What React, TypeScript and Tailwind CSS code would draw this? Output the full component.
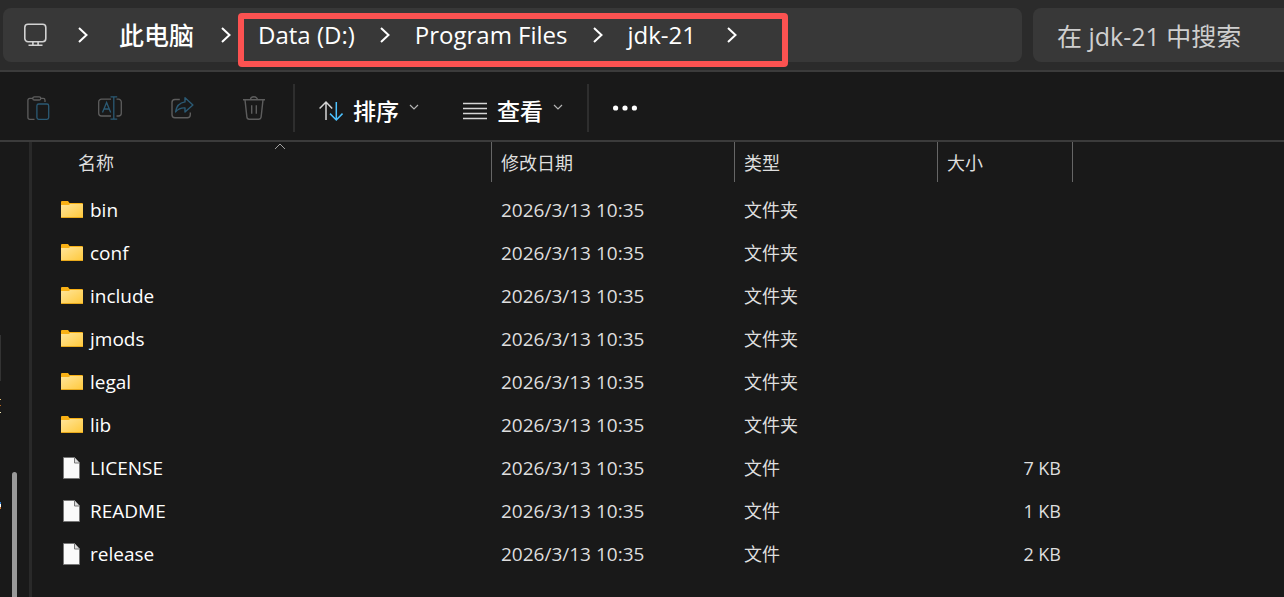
import React from 'react';

interface FileEntry {
  name: string;
  modified: string;
  kind: 'folder' | 'file';
  size?: string;
}

const entries: FileEntry[] = [
  { name: 'bin', modified: '2026/3/13 10:35', kind: 'folder' },
  { name: 'conf', modified: '2026/3/13 10:35', kind: 'folder' },
  { name: 'include', modified: '2026/3/13 10:35', kind: 'folder' },
  { name: 'jmods', modified: '2026/3/13 10:35', kind: 'folder' },
  { name: 'legal', modified: '2026/3/13 10:35', kind: 'folder' },
  { name: 'lib', modified: '2026/3/13 10:35', kind: 'folder' },
  { name: 'LICENSE', modified: '2026/3/13 10:35', kind: 'file', size: '7 KB' },
  { name: 'README', modified: '2026/3/13 10:35', kind: 'file', size: '1 KB' },
  { name: 'release', modified: '2026/3/13 10:35', kind: 'file', size: '2 KB' },
];

const Chevron = () => (
  <svg className="h-6 w-4 shrink-0" viewBox="0 0 16 24" fill="none" stroke="#fff" strokeWidth="2" aria-hidden="true">
    <path d="M4 5 L11.5 12 L4 19" />
  </svg>
);

const DownCaret = () => (
  <svg className="mb-2 h-2 w-2.5" viewBox="0 0 10 8" fill="none" stroke="#b5b5b5" strokeWidth="1.2" aria-hidden="true">
    <path d="M1 2 L5 6 L9 2" />
  </svg>
);

const MonitorIcon = () => (
  <svg className="h-6 w-6" viewBox="0 0 24 24" fill="none" stroke="#d2d2d2" strokeWidth="1.6" aria-hidden="true">
    <rect x="1.8" y="1.3" width="21" height="17.4" rx="3.2" />
    <path d="M9.9 18.8v3.4M15.1 18.8v3.4M5.5 22.2h14" />
  </svg>
);

const PasteIcon = () => (
  <svg className="h-6 w-6" viewBox="0 0 24 24" fill="none" strokeWidth="1.3" aria-hidden="true">
    <path d="M8.5 23.3H3.7A1.8 1.8 0 0 1 1.9 21.5V4.2a1.8 1.8 0 0 1 1.8-1.8H7M15 2.4h2.2a1.8 1.8 0 0 1 1.8 1.8V6" stroke="#5d5d5d" />
    <rect x="6.8" y="0.8" width="8" height="3.2" rx="1.6" stroke="#5d5d5d" />
    <rect x="10.9" y="8" width="11.8" height="15.3" rx="1.8" stroke="#2b5a74" />
  </svg>
);

const RenameIcon = () => (
  <svg className="h-6 w-6" viewBox="0 0 24 24" fill="none" strokeWidth="1.3" aria-hidden="true">
    <path d="M13 3.2H3.5A2.8 2.8 0 0 0 .7 6v11.2A2.8 2.8 0 0 0 3.5 20H13M18.5 3.2h1.8A2.8 2.8 0 0 1 23.3 6v11.2a2.8 2.8 0 0 1-2.8 2.8h-2" stroke="#5d5d5d" />
    <path d="M4.5 16.5 8.6 6.5l4.1 10M6 13h5.3M12.5.8h6.7M12.5 23.2h6.7M15.8 1v22" stroke="#2b5a74" />
  </svg>
);

const ShareIcon = () => (
  <svg className="h-6 w-6" viewBox="0 0 24 24" fill="none" strokeWidth="1.4" strokeLinejoin="round" aria-hidden="true">
    <path d="M9.8 3.5H5A3 3 0 0 0 2 6.5v12.3a3 3 0 0 0 3 3h12.3a3 3 0 0 0 3-3V16.5" stroke="#5d5d5d" />
    <path d="M15 1.8 22.9 9l-7.9 7v-4.1c-4-.2-6.9 1-9.4 4 .7-5.2 3.8-9.2 9.4-10z" stroke="#2b5a74" />
  </svg>
);

const TrashIcon = () => (
  <svg className="h-6 w-6" viewBox="0 0 24 24" fill="none" stroke="#5d5d5d" strokeWidth="1.4" aria-hidden="true">
    <path d="M1 3.8h22M8.5 3.8a3.5 3 0 0 1 7 0M3 3.8l1.9 17.4a2.3 2.3 0 0 0 2.3 2h9.6a2.3 2.3 0 0 0 2.3-2L21 3.8M9.7 9.3v8.4M14.3 9.3v8.4" />
  </svg>
);

const SortIcon = () => (
  <svg className="h-6 w-6" viewBox="0 0 24 24" fill="none" strokeWidth="1.5" aria-hidden="true">
    <path d="M7 21V3M.6 9.6 7 3l6.2 6.4" stroke="#d5d5d5" />
    <path d="M17.3 3v18M11 14.6l6.3 6.4 6.2-6.4" stroke="#4cc2ff" />
  </svg>
);

const ViewIcon = () => (
  <svg className="h-6 w-6" viewBox="0 0 24 24" fill="none" stroke="#d5d5d5" strokeWidth="1.4" aria-hidden="true">
    <path d="M0 4.5h24M0 9.5h24M0 14.5h24M0 19.5h24" />
  </svg>
);

const FolderIcon = () => (
  <svg className="h-6 w-6" viewBox="0 0 24 24" aria-hidden="true">
    <defs>
      <linearGradient id="folder" x1="0" y1="0" x2="1" y2="1">
        <stop offset="0" stopColor="#ffe59a" />
        <stop offset="1" stopColor="#ffc93c" />
      </linearGradient>
    </defs>
    <path d="M1 4a1 1 0 0 1 1-1h6l1.5 2H22a1 1 0 0 1 1 1v6H1z" fill="#f9b115" />
    <path d="M1 7h8l1-1h13v13.5H1z" fill="url(#folder)" />
    <path d="M1 19.5h22" stroke="#e8a91c" />
  </svg>
);

const FileIcon = () => (
  <svg className="h-6 w-6" viewBox="0 0 24 24" fill="#fafafa" stroke="#777" aria-hidden="true">
    <path d="M3.5 1.5h11l5 5.5v15.5h-16z" />
    <path d="M14.5 1.5v5.5h5" fill="#ddd" />
  </svg>
);

const toolButtons = [
  { label: '粘贴', icon: <PasteIcon /> },
  { label: '重命名', icon: <RenameIcon /> },
  { label: '共享', icon: <ShareIcon /> },
  { label: '删除', icon: <TrashIcon /> },
];

const AddressBar = () => (
  <header className="flex h-18 gap-[11px] border-b-2 border-[#3b3b3b] bg-[#2b2b2b] pt-2 pb-2 pl-[3px]">
    <nav aria-label="路径" className="flex min-w-0 flex-1 items-center rounded-lg bg-[#383838] pl-5 text-[24px] leading-8 whitespace-nowrap text-white">
      <button type="button" aria-label="位置">
        <MonitorIcon />
      </button>
      <span className="ml-7">
        <Chevron />
      </span>
      <a href="#pc" className="ml-7 text-[25px] font-medium">此电脑</a>
      <span className="ml-6">
        <Chevron />
      </span>
      <div className="relative ml-6 flex items-center">
        <a href="#data">Data (D:)</a>
        <span className="ml-[22px]">
          <Chevron />
        </span>
        <a href="#program-files" className="ml-[22px]">Program Files</a>
        <span className="ml-[22px]">
          <Chevron />
        </span>
        <a href="#jdk" className="ml-[22px]">jdk-21</a>
        <span className="ml-7">
          <Chevron />
        </span>
        <div className="absolute -top-1.5 -right-12 -bottom-4 -left-5 rounded-sm border-6 border-[#fc5251]" />
      </div>
    </nav>
    <input
      type="search"
      aria-label="搜索"
      placeholder="在 jdk-21 中搜索"
      className="w-[251px] shrink-0 rounded-l-lg bg-[#383838] pt-1 pl-6 text-[25px] text-white outline-none placeholder:text-[#cfcfcf]"
    />
  </header>
);

const Toolbar = () => (
  <div role="toolbar" aria-label="命令" className="flex h-[70px] items-center border-b-2 border-[#3b3b3b] pt-1 pl-[26px] text-[23px] text-white">
    <div className="flex gap-12">
      {toolButtons.map((tool) => (
        <button key={tool.label} type="button" disabled aria-label={tool.label}>
          {tool.icon}
        </button>
      ))}
    </div>
    <div className="ml-[27px] h-12 w-0.5 bg-[#2e2e2e]" />
    <button type="button" className="ml-6 flex items-center gap-2.5 pt-1.5">
      <SortIcon />
      <span className="font-medium">排序</span>
      <DownCaret />
    </button>
    <button type="button" className="ml-11 flex items-center gap-2.5 pt-1.5">
      <ViewIcon />
      <span className="font-medium">查看</span>
      <DownCaret />
    </button>
    <div className="ml-6 h-12 w-0.5 bg-[#2e2e2e]" />
    <button type="button" aria-label="更多" className="ml-6">
      <svg className="h-6 w-6" viewBox="0 0 24 24" fill="#fff" aria-hidden="true">
        <circle cx="2.6" cy="12" r="2.6" />
        <circle cx="12" cy="12" r="2.6" />
        <circle cx="21.4" cy="12" r="2.6" />
      </svg>
    </button>
  </div>
);

const headCell = 'flex h-10 items-center border-r border-[#666] pt-px text-[#dedede]';

const FileTable = () => (
  <table className="w-full table-fixed text-left text-[18px] leading-6 text-[#dedede]">
    <thead>
      <tr className="h-[46px] align-top">
        <th scope="col" className="relative w-[460px] p-0 font-normal">
          <div className={`${headCell} pl-[46px]`}>名称</div>
          <svg className="absolute top-0 left-[242px] h-2 w-3" viewBox="0 0 12 8" fill="none" stroke="#a0a0a0" aria-hidden="true">
            <path d="M1 7 L6 2 L11 7" />
          </svg>
        </th>
        <th scope="col" className="w-[243px] p-0 font-normal">
          <div className={`${headCell} pl-[9px]`}>修改日期</div>
        </th>
        <th scope="col" className="w-[203px] p-0 font-normal">
          <div className={`${headCell} pl-[9px]`}>类型</div>
        </th>
        <th scope="col" className="w-[135px] p-0 font-normal">
          <div className={`${headCell} pl-[9px]`}>大小</div>
        </th>
        <td />
      </tr>
    </thead>
    <tbody>
      {entries.map((entry) => (
        <tr key={entry.name} className="h-[43px]">
          <td className="p-0 pl-7 text-[19px] text-white">
            <div className="flex items-center gap-1.5">
              {entry.kind === 'folder' ? <FolderIcon /> : <FileIcon />}
              <span>{entry.name}</span>
            </div>
          </td>
          <td className="p-0 pl-[9px] text-[19px]">{entry.modified}</td>
          <td className="p-0 pl-[9px]">{entry.kind === 'folder' ? '文件夹' : '文件'}</td>
          <td className="p-0 pr-3 text-right">{entry.size}</td>
          <td />
        </tr>
      ))}
    </tbody>
  </table>
);

// Collapsed navigation pane: only a sliver of its items stays visible
const SidePane = () => (
  <aside className="flex w-8 shrink-0 justify-between border-r-3 border-[#292929]">
    <div className="flex w-px flex-col pt-[193px]">
      <div className="h-[46px] bg-[#333]" />
      <div className="mt-[18px] h-px bg-[#e8c27a]" />
      <div className="mt-[5px] h-px bg-[#b8651c]" />
      <div className="mt-1.5 h-px bg-[#f0e6b0]" />
      <div className="mt-[89px] h-0.5 bg-[#2f7fd0]" />
      <div className="h-[3px] bg-white" />
      <div className="h-0.5 bg-[#c8702c]" />
    </div>
    <div className="mt-[330px] mr-3 w-[5px] rounded-t-full bg-[#999]" />
  </aside>
);

const App: React.FC = () => {
  return (
    <div className="flex min-h-screen flex-col bg-[#191919] font-['Open_Sans','Noto_Sans_CJK_SC',sans-serif]">
      <AddressBar />
      <Toolbar />
      <main className="flex flex-1">
        <SidePane />
        <div className="min-w-0 flex-1">
          <FileTable />
        </div>
      </main>
    </div>
  );
};

export default App;
